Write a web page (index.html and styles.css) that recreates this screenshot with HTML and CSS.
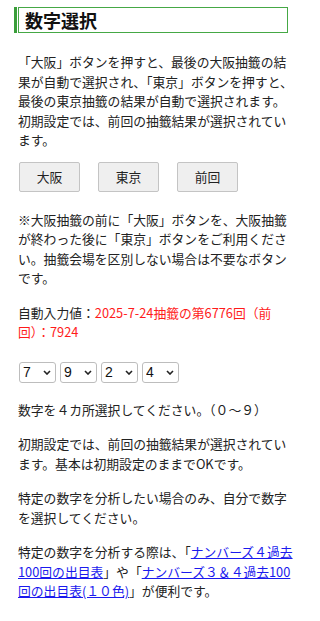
FILE: index.html
```html
<!DOCTYPE html>
<html lang="ja">
<head>
<meta charset="utf-8">
<meta name="viewport" content="width=device-width, initial-scale=1">
<link rel="stylesheet" href="styles.css">
</head>
<body>
<main class="page">
  <h2 class="heading">数字選択</h2>
  <p class="text intro">「大阪」ボタンを押すと、最後の大阪抽籤の結果が自動で選択され、「東京」ボタンを押すと、最後の東京抽籤の結果が自動で選択されます。初期設定では、前回の抽籤結果が選択されています。</p>
  <div class="buttons">
    <button class="btn" type="button">大阪</button>
    <button class="btn" type="button">東京</button>
    <button class="btn" type="button">前回</button>
  </div>
  <p class="text note">※大阪抽籤の前に「大阪」ボタンを、大阪抽籤が終わった後に「東京」ボタンをご利用ください。抽籤会場を区別しない場合は不要なボタンです。</p>
  <p class="text auto">自動入力値：<span class="red">2025-7-24抽籤の第6776回（前回）：7924</span></p>
  <div class="selects">
    <span class="selwrap"><select class="sel"><option>7</option></select><svg class="chev" width="8" height="5" viewBox="0 0 8 5"><path d="M1 1 L4 4 L7 1" fill="none" stroke="#222" stroke-width="1.6"/></svg></span>
    <span class="selwrap"><select class="sel"><option>9</option></select><svg class="chev" width="8" height="5" viewBox="0 0 8 5"><path d="M1 1 L4 4 L7 1" fill="none" stroke="#222" stroke-width="1.6"/></svg></span>
    <span class="selwrap"><select class="sel"><option>2</option></select><svg class="chev" width="8" height="5" viewBox="0 0 8 5"><path d="M1 1 L4 4 L7 1" fill="none" stroke="#222" stroke-width="1.6"/></svg></span>
    <span class="selwrap"><select class="sel"><option>4</option></select><svg class="chev" width="8" height="5" viewBox="0 0 8 5"><path d="M1 1 L4 4 L7 1" fill="none" stroke="#222" stroke-width="1.6"/></svg></span>
  </div>
  <p class="text after-sel">数字を４カ所選択してください。（０～９）</p>
  <p class="text">初期設定では、前回の抽籤結果が選択されています。基本は初期設定のままでOKです。</p>
  <p class="text">特定の数字を分析したい場合のみ、自分で数字を選択してください。</p>
  <p class="text last">特定の数字を分析する際は、「<a href="#">ナンバーズ４過去100回の出目表</a>」や「<a href="#">ナンバーズ３＆４過去100回の出目表(１０色)</a>」が便利です。</p>
</main>
</body>
</html>
```
FILE: styles.css
```css
html {
  -webkit-text-size-adjust: 100%;
  text-size-adjust: 100%;
}
html, body {
  margin: 0;
  padding: 0;
  background: #fff;
}
body {
  font-family: "Noto Sans CJK JP", "Noto Sans", sans-serif;
  color: #222;
  font-size: 12.8px;
}
.page {
  width: 300px;
  box-sizing: border-box;
  padding: 7px 4px 20px 18px;
}
.heading {
  margin: 0 8px 0 0;
  font-size: 18px;
  font-weight: bold;
  line-height: 24px;
  color: #111;
  border: 1px solid #45a845;
  padding: 0 6px;
  box-shadow: -1px 0 0 #fff, -4px 0 0 #3a9e3a;
}
.text {
  margin: 15px 0 0;
  line-height: 19.5px;
}
.intro {
  margin-top: 19px;
}
.buttons {
  display: flex;
  gap: 18px;
  margin-top: 12px;
  padding-left: 1px;
}
.btn {
  width: 61px;
  height: 30px;
  background: #efefef;
  border: 1px solid #c4c4c4;
  border-radius: 2px;
  font-family: "Noto Sans CJK JP", "Noto Sans", sans-serif;
  font-size: 12.8px;
  color: #222;
  padding: 0;
}
.note {
  margin-top: 18px;
}
.red {
  color: #ff1a1a;
}
.selects {
  display: flex;
  gap: 4px;
  margin-top: 20px;
  padding-left: 1px;
}
.selwrap {
  position: relative;
  display: block;
  width: 37px;
  height: 21px;
}
.sel {
  -webkit-appearance: none;
  appearance: none;
  display: block;
  width: 37px;
  height: 21px;
  box-sizing: border-box;
  font-family: "Liberation Sans", Arial, sans-serif;
  font-size: 14px;
  color: #111;
  border: 1px solid #bdbdbd;
  border-radius: 3px;
  background: #fff;
  padding: 0 0 0 3px;
  margin: 0;
}
.chev {
  position: absolute;
  right: 5px;
  top: 8px;
  pointer-events: none;
}
.after-sel {
  margin-top: 17px;
}
a {
  color: #1a1aee;
  text-decoration: underline;
}
```
